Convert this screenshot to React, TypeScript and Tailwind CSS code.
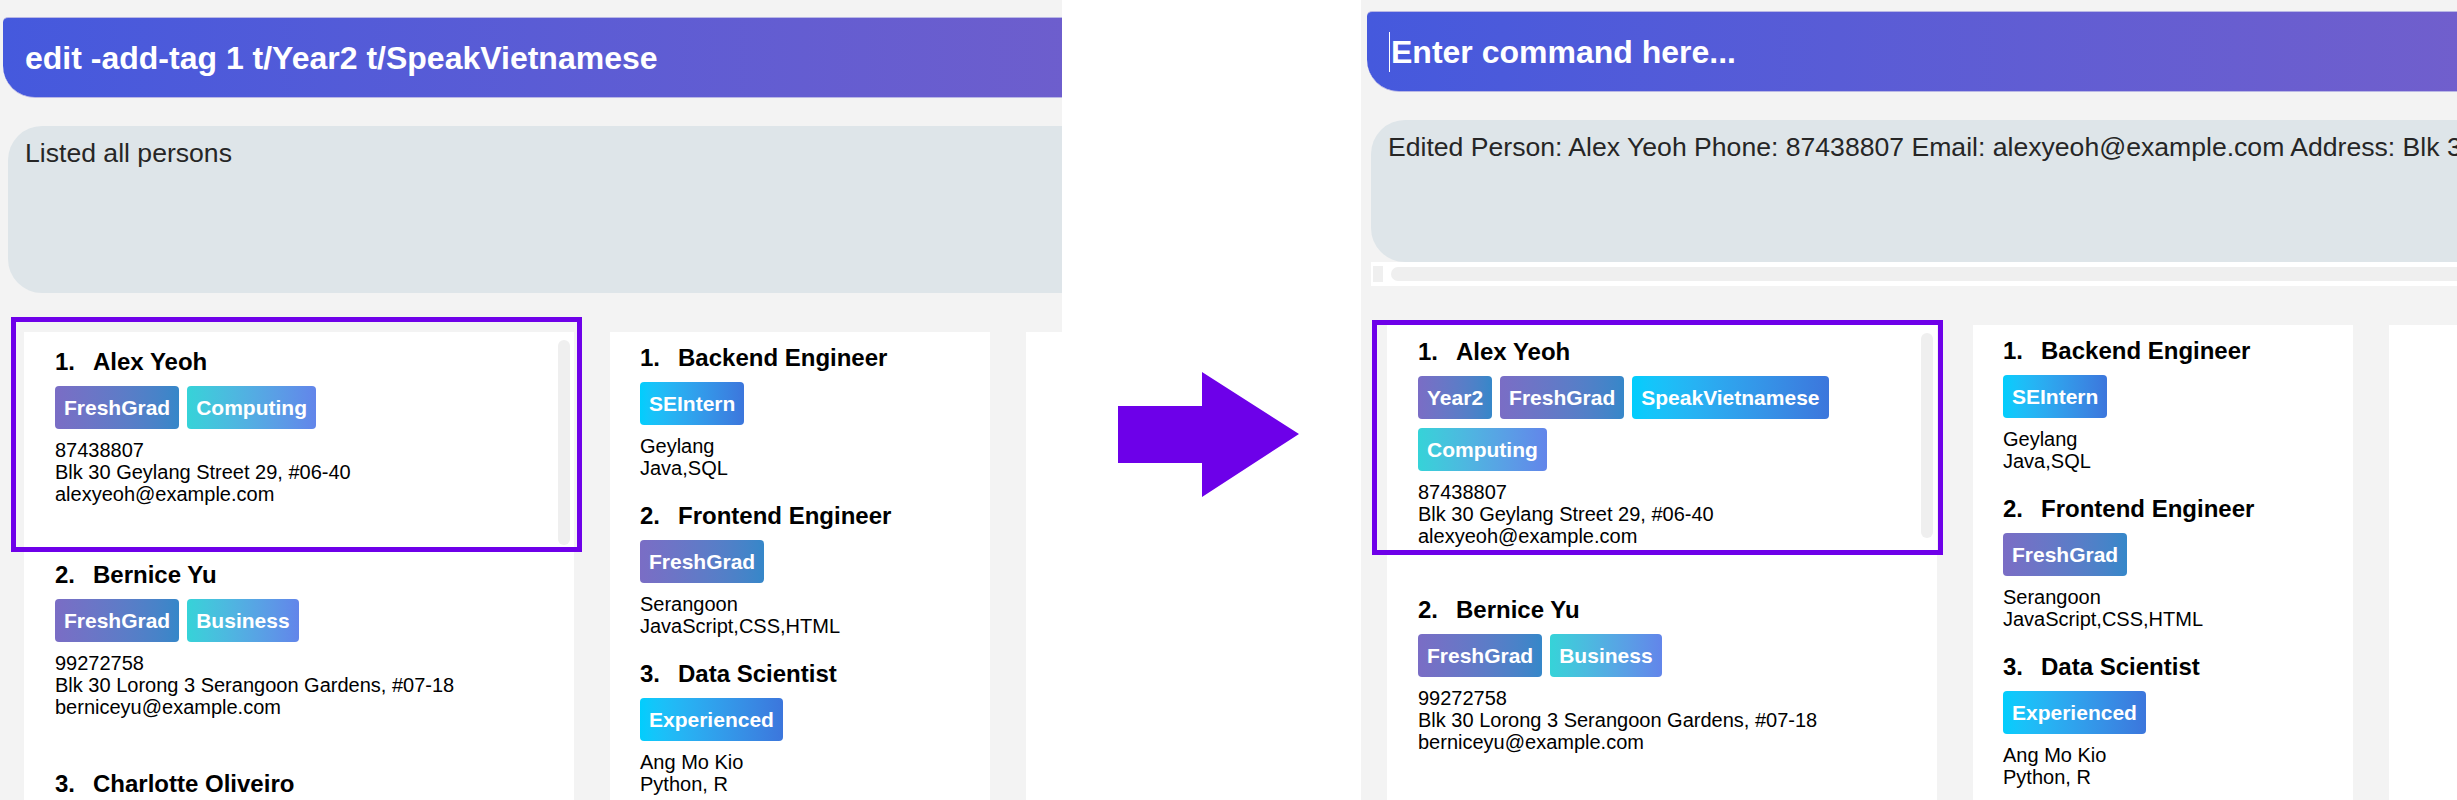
type TagKind = "grad" | "teal" | "cyan";

type Person = {
  name: string;
  tags: [string, TagKind][];
  phone: string;
  address: string;
  email: string;
};

type Job = {
  title: string;
  tag: [string, TagKind];
  location: string;
  skills: string;
};

const TAG_COLOURS: Record<TagKind, string> = {
  grad: "from-[#7a6dc5] to-[#3587c9]",
  teal: "from-[#35d3d8] to-[#6285ea]",
  cyan: "from-[#00cefd] to-[#3c76dc]",
};

const PERSONS_BEFORE: Person[] = [
  {
    name: "Alex Yeoh",
    tags: [
      ["FreshGrad", "grad"],
      ["Computing", "teal"],
    ],
    phone: "87438807",
    address: "Blk 30 Geylang Street 29, #06-40",
    email: "alexyeoh@example.com",
  },
  {
    name: "Bernice Yu",
    tags: [
      ["FreshGrad", "grad"],
      ["Business", "teal"],
    ],
    phone: "99272758",
    address: "Blk 30 Lorong 3 Serangoon Gardens, #07-18",
    email: "berniceyu@example.com",
  },
  {
    name: "Charlotte Oliveiro",
    tags: [["Computing", "teal"]],
    phone: "93210283",
    address: "Blk 11 Ang Mo Kio Street 74, #11-04",
    email: "charlotte@example.com",
  },
];

const PERSONS_AFTER: Person[] = [
  {
    ...PERSONS_BEFORE[0],
    tags: [
      ["Year2", "grad"],
      ["FreshGrad", "grad"],
      ["SpeakVietnamese", "cyan"],
      ["Computing", "teal"],
    ],
  },
  PERSONS_BEFORE[1],
  PERSONS_BEFORE[2],
];

const JOBS: Job[] = [
  { title: "Backend Engineer", tag: ["SEIntern", "cyan"], location: "Geylang", skills: "Java,SQL" },
  { title: "Frontend Engineer", tag: ["FreshGrad", "grad"], location: "Serangoon", skills: "JavaScript,CSS,HTML" },
  { title: "Data Scientist", tag: ["Experienced", "cyan"], location: "Ang Mo Kio", skills: "Python, R" },
];

function Tag({ label, kind }: { label: string; kind: TagKind }) {
  return (
    <span
      className={`flex h-[43px] items-center rounded-[4px] bg-linear-to-r px-[9px] text-[21px] font-bold text-white ${TAG_COLOURS[kind]}`}
    >
      {label}
    </span>
  );
}

function Title({ index, text }: { index: number; text: string }) {
  return (
    <div className="flex h-[28px] items-center whitespace-nowrap text-[24px] font-bold leading-[28px] text-black">
      <span className="w-[38px]">{index}.</span>
      <span>{text}</span>
    </div>
  );
}

function PersonCard({
  index,
  person,
  scroll,
  topPad,
}: {
  index: number;
  person: Person;
  scroll: boolean;
  topPad: string;
}) {
  return (
    <div className="flex">
      <div className={`flex-1 pb-[36px] pl-[31px] ${topPad}`}>
        <Title index={index} text={person.name} />
        <div className="mt-[10px] flex flex-wrap gap-x-[8px] gap-y-[9px]">
          {person.tags.map(([label, kind]) => (
            <Tag key={label} label={label} kind={kind} />
          ))}
        </div>
        <div className="mt-[10px] text-[20px] leading-[22px] text-black">
          <div>{person.phone}</div>
          <div>{person.address}</div>
          <div>{person.email}</div>
        </div>
      </div>
      {scroll && <div className="mr-[4px] mt-[8px] h-[205px] w-[12px] rounded-full bg-[#efefef]" />}
    </div>
  );
}

function JobItem({ index, job }: { index: number; job: Job }) {
  return (
    <div className="pb-[11px] pl-[30px] pt-[12px]">
      <Title index={index} text={job.title} />
      <div className="mt-[10px] flex">
        <Tag label={job.tag[0]} kind={job.tag[1]} />
      </div>
      <div className="mt-[10px] text-[20px] leading-[22px] text-black">
        <div>{job.location}</div>
        <div>{job.skills}</div>
      </div>
    </div>
  );
}

function Lists({ persons, topPad }: { persons: Person[]; topPad: string }) {
  return (
    <div className="flex h-full gap-[36px]">
      <div className="w-[550px] shrink-0 overflow-hidden bg-white">
        {persons.map((p, i) => (
          <PersonCard key={p.name} index={i + 1} person={p} scroll={i === 0} topPad={topPad} />
        ))}
      </div>
      <div className="w-[380px] shrink-0 overflow-hidden bg-white">
        {JOBS.map((j, i) => (
          <JobItem key={j.title} index={i + 1} job={j} />
        ))}
      </div>
      <div className="w-[380px] shrink-0 bg-white" />
    </div>
  );
}

function Highlight({ top }: { top: string }) {
  return (
    <div
      className={`pointer-events-none absolute left-[11px] h-[235px] w-[571px] border-[5px] border-[#6e00e9] ${top}`}
    />
  );
}

export default function App() {
  return (
    <div className="flex h-[800px] w-[2457px] overflow-hidden bg-white font-['Liberation_Sans',Arial,sans-serif]">
      {/* before */}
      <div className="relative flex h-[800px] w-[1062px] shrink-0 flex-col overflow-hidden bg-[#f3f3f3]">
        <div className="ml-[3px] mt-[17px] flex h-[81px] w-[1120px] shrink-0 items-center rounded-bl-[32px] rounded-tl-[5px] border-y border-[#b9b7e5] bg-linear-to-r from-[#4559dd] to-[#6f5ecc] pl-[22px]">
          <span className="whitespace-nowrap text-[32px] font-bold text-white">
            edit -add-tag 1 t/Year2 t/SpeakVietnamese
          </span>
        </div>
        <div className="ml-[8px] mt-[28px] h-[167px] w-[1120px] shrink-0 rounded-l-[34px] bg-[#dee5e9] pl-[17px] pt-[8px]">
          <span className="whitespace-nowrap text-[26.6px] text-[#262626]">Listed all persons</span>
        </div>
        <div className="ml-[24px] mt-[39px] min-h-0 flex-1">
          <Lists persons={PERSONS_BEFORE} topPad="pt-[16px]" />
        </div>
        <Highlight top="top-[317px]" />
      </div>

      {/* arrow */}
      <div className="w-[299px] shrink-0 bg-white">
        <svg className="ml-[56px] mt-[372px]" width="181" height="125" viewBox="0 0 181 125">
          <polygon points="0,34 84,34 84,0 181,62 84,125 84,91 0,91" fill="#6d00e9" />
        </svg>
      </div>

      {/* after */}
      <div className="relative flex h-[800px] min-w-0 flex-1 flex-col overflow-hidden bg-[#f3f3f3]">
        <div className="ml-[6px] mt-[11px] flex h-[81px] w-[1200px] shrink-0 items-center rounded-bl-[32px] rounded-tl-[5px] border-y border-[#b9b7e5] bg-linear-to-r from-[#4559dd] to-[#745fcb] pl-[22px]">
          <span className="h-[40px] w-[1px] bg-white" />
          <span className="ml-[1px] whitespace-nowrap text-[32px] font-bold text-white">Enter command here...</span>
        </div>
        <div className="ml-[10px] mt-[28px] h-[142px] w-[1200px] shrink-0 rounded-l-[34px] bg-[#dee5e9] pl-[17px] pt-[8px]">
          <span className="whitespace-nowrap text-[26.6px] text-[#262626]">
            Edited Person: Alex Yeoh Phone: 87438807 Email: alexyeoh@example.com Address: Blk 30 Geylang Street 29,
            #06-40 Tags: [Year2][FreshGrad][SpeakVietnamese][Computing]
          </span>
        </div>
        <div className="ml-[10px] flex h-[24px] w-[1200px] shrink-0 items-center bg-white">
          <span className="ml-[2px] h-[16px] w-[10px] bg-[#efefef]" />
          <span className="ml-[8px] h-[14px] flex-1 rounded-full bg-[#efefef]" />
        </div>
        <div className="ml-[26px] mt-[39px] min-h-0 flex-1">
          <Lists persons={PERSONS_AFTER} topPad="pt-[13px]" />
        </div>
        <Highlight top="top-[320px]" />
      </div>
    </div>
  );
}
